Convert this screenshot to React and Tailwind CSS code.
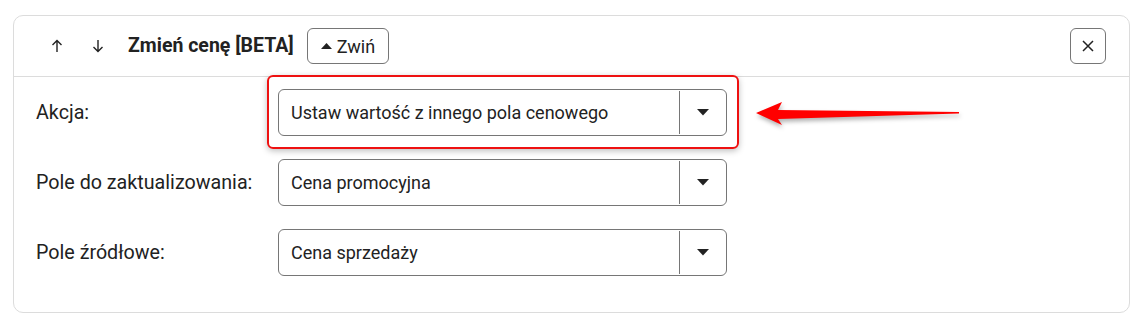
import React from "react";

function Caret() {
  return (
    <svg width="12" height="7" viewBox="0 0 12 7">
      <path d="M0 0 L12 0 L6 6.5 Z" fill="#222" />
    </svg>
  );
}

function Select({ value }) {
  return (
    <div className="flex h-[47px] w-[449px] items-stretch rounded-[6px] border border-[#767676] bg-white">
      <div className="flex flex-1 items-center pl-[12px] text-[18px] text-[#222]">{value}</div>
      <div className="my-[1px] w-px bg-[#767676]" />
      <div className="flex w-[46px] items-center justify-center">
        <Caret />
      </div>
    </div>
  );
}

function Row({ label, value, highlight }) {
  return (
    <div className="flex items-center">
      <div className="w-[242px] text-[19.7px] text-[#222]">{label}</div>
      <div className="relative">
        {highlight && (
          <div className="pointer-events-none absolute left-[-11px] top-[-14px] h-[74px] w-[472px] rounded-[6px] border-2 border-[#ee1111] shadow-[0_2px_6px_rgba(0,0,0,0.25)]" />
        )}
        <Select value={value} />
      </div>
    </div>
  );
}

export default function App() {
  return (
    <div className="h-[328px] w-[1142px] bg-white pl-[13px] pt-[15px]" style={{ fontFamily: "Roboto, 'Noto Sans', sans-serif" }}>
      <div className="relative h-[298px] w-[1117px] rounded-[10px] border border-[#dcdcdc] bg-white">
        <div className="flex h-[61px] items-center border-b border-[#dcdcdc] pl-[36px] pr-[23px]">
          <svg width="14" height="14" viewBox="0 0 14 14">
            <path d="M7 13 V1.5 M2.5 6 L7 1.5 L11.5 6" fill="none" stroke="#222" strokeWidth="1.4" />
          </svg>
          <svg width="14" height="14" viewBox="0 0 14 14" className="ml-[27px]">
            <path d="M7 1 V12.5 M2.5 8 L7 12.5 L11.5 8" fill="none" stroke="#222" strokeWidth="1.4" />
          </svg>
          <div className="ml-[23px] text-[19.5px] font-bold text-[#222]">Zmień cenę [BETA]</div>
          <button className="ml-[13px] flex h-[36px] items-center gap-[5px] rounded-[6px] border border-[#767676] bg-white px-[13px] text-[18px] text-[#222]">
            <svg width="11" height="6" viewBox="0 0 11 6">
              <path d="M0 6 L11 6 L5.5 0 Z" fill="#222" />
            </svg>
            Zwiń
          </button>
          <div className="flex-1" />
          <button className="flex h-[36px] w-[36px] items-center justify-center rounded-[6px] border border-[#767676] bg-white">
            <svg width="12" height="12" viewBox="0 0 12 12">
              <path d="M1 1 L11 11 M11 1 L1 11" stroke="#222" strokeWidth="1.5" />
            </svg>
          </button>
        </div>
        <div className="flex flex-col gap-[23px] pl-[22px] pt-[12px]">
          <Row label="Akcja:" value="Ustaw wartość z innego pola cenowego" highlight />
          <Row label="Pole do zaktualizowania:" value="Cena promocyjna" />
          <Row label="Pole źródłowe:" value="Cena sprzedaży" />
        </div>
        <svg
          className="pointer-events-none absolute left-[738px] top-[82px]"
          width="215"
          height="34"
          viewBox="0 0 215 34"
          style={{ filter: "drop-shadow(1px 3px 2px rgba(0,0,0,0.3))" }}
        >
          <path d="M4 15 L30 4 L26 12 L207 14 L207 15.5 L26 21 L30 27 Z" fill="#ff0000" />
        </svg>
      </div>
    </div>
  );
}
